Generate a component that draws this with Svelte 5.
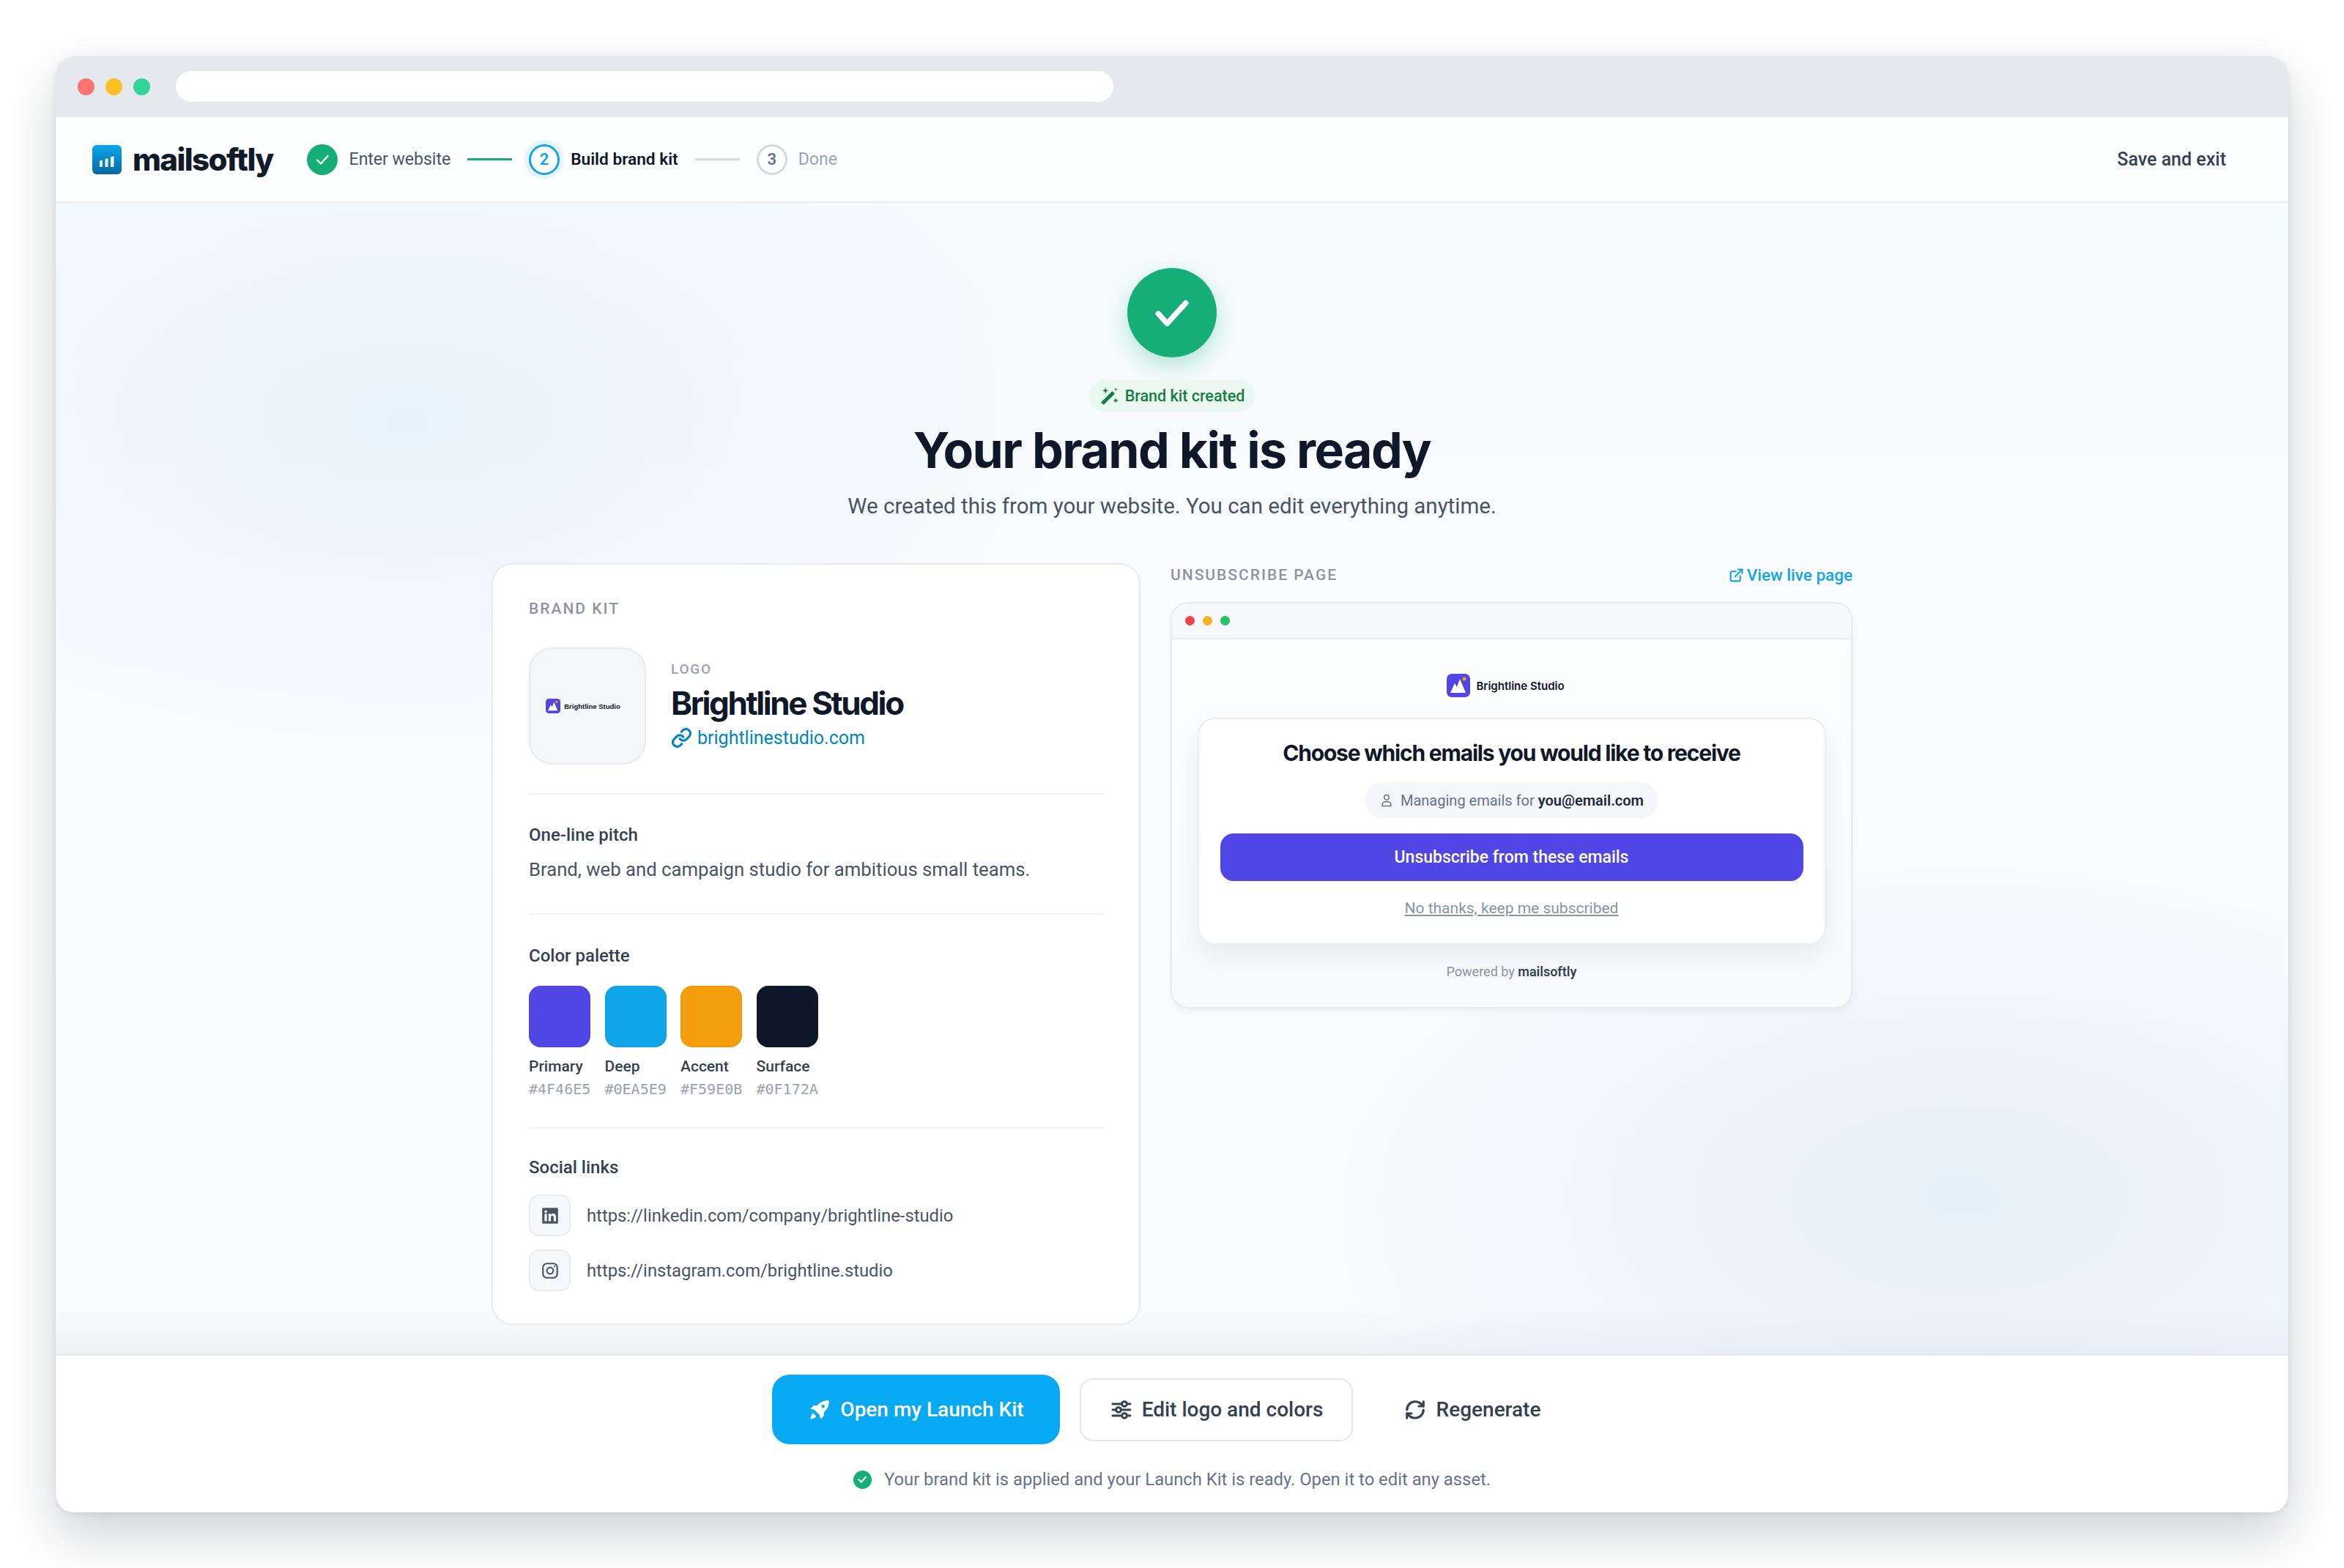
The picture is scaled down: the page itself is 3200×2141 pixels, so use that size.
<script>
  const swatches = [
    { name: 'Primary', hex: '#4F46E5' },
    { name: 'Deep', hex: '#0EA5E9' },
    { name: 'Accent', hex: '#F59E0B' },
    { name: 'Surface', hex: '#0F172A' }
  ];
</script>

<div class="page">
  <div class="window">
    <div class="chrome">
      <span class="dot red"></span>
      <span class="dot yellow"></span>
      <span class="dot green"></span>
      <div class="address"></div>
    </div>

    <header class="topbar">
      <div class="brand">
        <div class="brand-icon">
          <svg viewBox="0 0 40 40" width="40" height="40"><path d="M10 21.500l4-1V30h-4zM17.500 19.500l4-1.500V30h-4zM25 16.500l4.500-1.500V30H25z" fill="#fff" opacity=".92"/></svg>
        </div>
        <span class="brand-name">mailsoftly</span>
      </div>
      <div class="steps">
        <span class="circle done">
          <svg viewBox="0 0 24 24" width="24" height="24" fill="none" stroke="#fff" stroke-width="2.400" stroke-linecap="round" stroke-linejoin="round"><path d="M5 12.500l5 5L19.500 7"/></svg>
        </span>
        <span class="step-label">Enter website</span>
        <span class="line active"></span>
        <span class="circle current">2</span>
        <span class="step-label strong">Build brand kit</span>
        <span class="line"></span>
        <span class="circle todo">3</span>
        <span class="step-label muted">Done</span>
      </div>
      <a class="save">Save and exit</a>
    </header>

    <main class="main">
      <div class="big-check">
        <svg viewBox="0 0 24 24" width="64" height="64" fill="none" stroke="#fff" stroke-width="2.800" stroke-linecap="round" stroke-linejoin="round"><path d="M5 12.500l4.500 5 9.500-10.500"/></svg>
      </div>
      <div class="created">
        <svg viewBox="0 0 24 24" width="28" height="28" fill="#15803d"><path d="M2.500 18.500L15 6l3 3L5.500 21.500a1 1 0 0 1-1.400 0l-1.600-1.600a1 1 0 0 1 0-1.400z"/><path d="M7 2l1 2.500L10.500 5.500 8 6.500 7 9 6 6.500 3.500 5.500 6 4.500zM19 14l.9 2.100 2.100.9-2.100.9L19 20l-.9-2.100L16 17l2.100-.9zM19 2l.6 1.400L21 4l-1.400.6L19 6l-.6-1.400L17 4l1.400-.6z"/></svg>
        Brand kit created
      </div>
      <h1>Your brand kit is ready</h1>
      <p class="sub">We created this from your website. You can edit everything anytime.</p>

      <div class="columns">
        <section class="kit">
          <div class="eyebrow">BRAND KIT</div>
          <div class="logo-row">
            <div class="logo-box">
              <svg viewBox="0 0 32 32" width="20" height="20"><rect width="32" height="32" rx="7" fill="#4f46e5"/><path d="M5 26l6-13 3 5 4-11 8 19z" fill="#fff"/><circle cx="24" cy="7" r="2.500" fill="#f59e0b"/></svg>
              <span>Brightline Studio</span>
            </div>
            <div class="logo-info">
              <div class="small-label">LOGO</div>
              <div class="studio">Brightline Studio</div>
              <a class="site">
                <svg viewBox="0 0 24 24" width="29" height="29" fill="none" stroke="#0284c7" stroke-width="2.600" stroke-linecap="round" stroke-linejoin="round"><path d="M10 13a5 5 0 0 0 7.540.540l3-3a5 5 0 0 0-7.070-7.070l-1.720 1.710"/><path d="M14 11a5 5 0 0 0-7.540-.540l-3 3a5 5 0 0 0 7.070 7.070l1.710-1.710"/></svg>
                brightlinestudio.com
              </a>
            </div>
          </div>

          <hr />
          <div class="field-title first">One-line pitch</div>
          <p class="pitch">Brand, web and campaign studio for ambitious small teams.</p>

          <hr />
          <div class="field-title palette-title">Color palette</div>
          <div class="palette">
            {#each swatches as s}
              <div class="swatch">
                <div class="chip" style="background: {s.hex}"></div>
                <div class="chip-name">{s.name}</div>
                <div class="chip-hex">{s.hex}</div>
              </div>
            {/each}
          </div>

          <hr />
          <div class="field-title social-title">Social links</div>
          <div class="social">
            <span class="social-icon">
              <svg viewBox="0 0 24 24" width="26" height="26" fill="#475569"><path fill-rule="evenodd" d="M3.500 2h17A1.500 1.500 0 0 1 22 3.500v17a1.500 1.500 0 0 1-1.500 1.500h-17A1.500 1.500 0 0 1 2 20.500v-17A1.500 1.500 0 0 1 3.500 2zM5 9.500V19h3V9.500zM6.500 5a1.700 1.700 0 1 0 0 3.400 1.700 1.700 0 0 0 0-3.400zM10 9.500V19h3v-5c0-1.400.7-2.100 1.800-2.100s1.700.7 1.700 2.100v5h3v-5.600c0-2.800-1.500-4.100-3.500-4.100-1.400 0-2.400.6-3 1.500V9.500z"/></svg>
            </span>
            https://linkedin.com/company/brightline-studio
          </div>
          <div class="social">
            <span class="social-icon">
              <svg viewBox="0 0 24 24" width="26" height="26" fill="none" stroke="#475569" stroke-width="2" stroke-linecap="round"><rect x="3" y="3" width="18" height="18" rx="5"/><circle cx="12" cy="12" r="4"/><path d="M17.500 6.500h.010"/></svg>
            </span>
            https://instagram.com/brightline.studio
          </div>
        </section>

        <section class="preview">
          <div class="preview-head">
            <span class="eyebrow">UNSUBSCRIBE PAGE</span>
            <a class="live">
              <svg viewBox="0 0 24 24" width="21" height="21" fill="none" stroke="#0ea5e9" stroke-width="2.400" stroke-linecap="round" stroke-linejoin="round"><path d="M15 3h6v6"/><path d="M10 14 21 3"/><path d="M18 13v6a2 2 0 0 1-2 2H5a2 2 0 0 1-2-2V8a2 2 0 0 1 2-2h6"/></svg>
              View live page
            </a>
          </div>
          <div class="frame">
            <div class="frame-bar">
              <span class="mini red2"></span>
              <span class="mini yellow2"></span>
              <span class="mini green2"></span>
            </div>
            <div class="frame-body">
              <div class="frame-logo">
                <svg viewBox="0 0 32 32" width="32" height="32"><rect width="32" height="32" rx="7" fill="#4f46e5"/><path d="M5 26l6-13 3 5 4-11 8 19z" fill="#fff"/><circle cx="24" cy="7" r="2.500" fill="#f59e0b"/></svg>
                <span>Brightline Studio</span>
              </div>
              <div class="sheet">
                <h2>Choose which emails you would like to receive</h2>
                <div class="managing">
                  <svg viewBox="0 0 24 24" width="20" height="20" fill="none" stroke="#64748b" stroke-width="1.800" stroke-linecap="round"><circle cx="12" cy="7" r="4"/><path d="M5 21v-2a5 5 0 0 1 5-5h4a5 5 0 0 1 5 5v2z"/></svg>
                  <span>Managing emails for <b>you@email.com</b></span>
                </div>
                <button class="unsub">Unsubscribe from these emails</button>
                <a class="keep">No thanks, keep me subscribed</a>
              </div>
              <div class="powered">Powered by <b>mailsoftly</b></div>
            </div>
          </div>
        </section>
      </div>
    </main>

    <footer class="actions">
      <div class="buttons">
        <button class="btn primary">
          <svg viewBox="0 0 24 24" width="32" height="32" fill="#fff"><path fill-rule="evenodd" d="M21.500 2.500c-4.800-.3-9 1.400-12 5.200H5.800L2.500 11l4.300 1.200 5 5L13 21.500l3.300-3.300v-3.700c3.800-3 5.500-7.200 5.200-12zM15.500 6.800a1.700 1.700 0 1 1 0 3.400 1.700 1.700 0 0 1 0-3.400z"/><path d="M5.500 15.500c-1.500.8-2.500 2.500-3 6 3.500-.5 5.200-1.500 6-3z"/></svg>
          Open my Launch Kit
        </button>
        <button class="btn outline">
          <svg viewBox="0 0 24 24" width="32" height="32" fill="none" stroke="#334155" stroke-width="2.200" stroke-linecap="round"><path d="M3 6h9M18 6h3M3 12h3M12 12h9M3 18h9M18 18h3"/><circle cx="15" cy="6" r="2.500"/><circle cx="9" cy="12" r="2.500"/><circle cx="15" cy="18" r="2.500"/></svg>
          Edit logo and colors
        </button>
        <button class="btn ghost">
          <svg viewBox="0 0 24 24" width="30" height="30" fill="none" stroke="#334155" stroke-width="2.500" stroke-linecap="round" stroke-linejoin="round"><path d="M3 12a9 9 0 0 1 9-9 9.750 9.750 0 0 1 6.740 2.740L21 8"/><path d="M21 3v5h-5"/><path d="M21 12a9 9 0 0 1-9 9 9.750 9.750 0 0 1-6.740-2.740L3 16"/><path d="M8 16H3v5"/></svg>
          Regenerate
        </button>
      </div>
      <div class="status">
        <span class="status-check">
          <svg viewBox="0 0 24 24" width="16" height="16" fill="none" stroke="#fff" stroke-width="3.200" stroke-linecap="round" stroke-linejoin="round"><path d="M5 12.500l5 5L19.500 7"/></svg>
        </span>
        Your brand kit is applied and your Launch Kit is ready. Open it to edit any asset.
      </div>
    </footer>
  </div>
</div>

<style>
  :global(body) {
    margin: 0;
    background: #fff;
    font-family: Roboto, "Liberation Sans", sans-serif;
    color: #0f172a;
  }

  .page {
    height: 2141px;
    box-sizing: border-box;
    padding: 77px 76px 76px;
    overflow: hidden;
  }

  .window {
    height: 1988px;
    border-radius: 26px;
    overflow: hidden;
    background: #fff;
    display: flex;
    flex-direction: column;
    box-shadow: 0 30px 70px rgba(15, 23, 42, 0.2), 0 2px 10px rgba(15, 23, 42, 0.08);
  }

  .chrome {
    height: 83px;
    flex: none;
    background: #e5e9ee;
    display: flex;
    align-items: center;
    padding-left: 30px;
    box-sizing: border-box;
  }

  .dot { width: 23px; height: 23px; border-radius: 50%; margin-right: 15px; }
  .red { background: #ff7272; }
  .yellow { background: #fcc024; }
  .green { background: #34d399; }

  .address {
    width: 1280px;
    height: 42px;
    margin: 0 0 1px 20px;
    border-radius: 21px;
    background: #fff;
  }

  .topbar {
    height: 117px;
    flex: none;
    box-sizing: border-box;
    display: flex;
    align-items: center;
    padding: 0 85px 0 50px;
    background: #fdfeff;
    border-bottom: 2px solid #e8edf2;
  }

  .brand { display: flex; align-items: center; gap: 15px; }

  .brand-icon {
    width: 40px;
    height: 40px;
    border-radius: 6px;
    background: linear-gradient(180deg, #0ea5e9, #0369a1);
  }

  .brand-name {
    font-family: Inter, sans-serif;
    font-size: 42px;
    font-weight: 800;
    letter-spacing: -1.600px;
    line-height: 50px;
    color: #0f1a2b;
  }

  .steps { display: flex; align-items: center; margin-left: 46px; flex: 1; }

  .circle {
    width: 42px;
    height: 42px;
    box-sizing: border-box;
    border-radius: 50%;
    display: flex;
    align-items: center;
    justify-content: center;
    font-size: 22px;
    font-weight: 600;
    flex: none;
  }

  .done { background: #15ad78; }
  .current { border: 3px solid #0ea5e9; color: #0ea5e9; background: #fff; box-shadow: 0 0 0 6px #e6f6fd; }
  .todo { border: 3px solid #d5d9df; color: #64748b; background: #fff; }

  .step-label { font-size: 23px; color: #475569; margin-left: 16px; line-height: 30px; white-space: nowrap; }
  .strong { color: #0f172a; font-weight: 600; font-size: 22.700px; margin-left: 15px; }
  .muted { color: #94a3b8; margin-left: 15px; }

  .line { width: 61px; height: 3px; margin: 0 23px; background: #d9dde2; flex: none; }
  .line.active { background: #15ad78; }

  .save { font-size: 25px; font-weight: 500; color: #334155; white-space: nowrap; }

  .main {
    flex: 1;
    min-height: 0;
    display: flex;
    flex-direction: column;
    align-items: center;
    padding-top: 89px;
    box-sizing: border-box;
    background:
      radial-gradient(900px 500px at 480px 300px, rgba(205, 230, 250, 0.4), transparent 100%),
      radial-gradient(900px 500px at 2600px 1360px, rgba(205, 228, 245, 0.5), transparent 100%),
      linear-gradient(180deg, #f6fbfe 0%, #fbfcfe 45%, #fafbfd 96%, #eef1f6 100%);
  }

  .big-check {
    width: 122px;
    height: 122px;
    border-radius: 50%;
    background: #15ad78;
    display: flex;
    align-items: center;
    justify-content: center;
    box-shadow: 0 12px 32px rgba(21, 173, 120, 0.3);
  }

  .created {
    height: 45px;
    margin-top: 30px;
    padding: 0 15px;
    border-radius: 23px;
    background: #ecf9f3;
    color: #15803d;
    font-size: 21.500px;
    font-weight: 500;
    display: flex;
    align-items: center;
    gap: 7px;
  }

  h1 {
    font-family: Inter, sans-serif;
    margin: 13px 0 0;
    font-size: 68px;
    line-height: 76px;
    font-weight: 700;
    letter-spacing: -1.600px;
    color: #0f172a;
  }

  .sub {
    margin: 19px 0 0;
    font-size: 29.500px;
    line-height: 40px;
    color: #475569;
  }

  .columns {
    margin-top: 58px;
    display: grid;
    grid-template-columns: 886px 931px;
    gap: 41px;
    align-items: start;
  }

  .kit {
    height: 1040px;
    box-sizing: border-box;
    padding: 48px 49px 0;
    background: #fff;
    border: 2px solid #e7ebf0;
    border-radius: 28px;
  }

  .eyebrow {
    font-size: 21px;
    line-height: 24px;
    font-weight: 500;
    letter-spacing: 2px;
    color: #8a94a6;
  }

  .logo-row { display: flex; gap: 34px; margin-top: 41px; align-items: center; }

  .logo-box {
    width: 160px;
    height: 160px;
    box-sizing: border-box;
    border: 2px solid #e7ebf0;
    border-radius: 32px;
    background: #f4f6fa;
    display: flex;
    align-items: center;
    justify-content: center;
    gap: 5px;
    padding-right: 12px;
    flex: none;
  }

  .logo-box span { font-family: "Liberation Sans", sans-serif; font-size: 9.500px; font-weight: 700; white-space: nowrap; }

  .small-label { font-size: 19px; line-height: 22px; font-weight: 500; letter-spacing: 1.800px; color: #94a3b8; }

  .studio {
    font-family: Inter, sans-serif;
    font-size: 44px;
    line-height: 56px;
    font-weight: 700;
    letter-spacing: -2.400px;
    margin-top: 7px;
  }

  .site {
    display: flex;
    align-items: center;
    gap: 7px;
    margin-top: 2px;
    font-size: 25px;
    line-height: 36px;
    color: #0284c7;
  }

  hr { border: 0; border-top: 2px solid #eff2f5; margin: 39px 0 0; }

  .field-title { font-size: 24px; line-height: 28px; font-weight: 500; color: #334155; margin-top: 41px; }
  .palette-title { margin-top: 42px; }
  .social-title { margin-top: 39px; }

  .pitch { margin: 15px 0 0; font-size: 25.700px; line-height: 36px; color: #475569; padding-bottom: 3px; }

  .palette { display: flex; gap: 19.500px; margin-top: 27px; }

  .swatch { width: 84px; }

  .chip { height: 84px; border-radius: 16px; box-shadow: inset 0 0 0 1px rgba(0, 0, 0, 0.05); }

  .chip-name { margin-top: 13px; font-size: 21px; line-height: 26px; font-weight: 500; color: #334155; white-space: nowrap; }

  .chip-hex {
    margin-top: 5px;
    font-family: "DejaVu Sans Mono", "Liberation Mono", monospace;
    font-size: 20px;
    line-height: 26px;
    color: #94a3b8;
    white-space: nowrap;
  }

  .social {
    display: flex;
    align-items: center;
    gap: 22px;
    margin-top: 18px;
    font-size: 23.800px;
    color: #475569;
    white-space: nowrap;
  }

  .social-title + .social { margin-top: 23px; }

  .social-icon {
    width: 57px;
    height: 57px;
    box-sizing: border-box;
    border: 2px solid #e8ecf1;
    border-radius: 14px;
    background: #f6f8fb;
    display: flex;
    align-items: center;
    justify-content: center;
    flex: none;
  }

  .preview-head { display: flex; justify-content: space-between; align-items: center; height: 32px; }

  .live { display: flex; align-items: center; gap: 4px; font-size: 22.500px; font-weight: 500; color: #0ea5e9; white-space: nowrap; }

  .frame {
    margin-top: 21px;
    height: 555px;
    box-sizing: border-box;
    border: 2px solid #e7ebf0;
    border-radius: 24px;
    overflow: hidden;
    background: linear-gradient(180deg, #fdfeff, #f8fafc);
    box-shadow: 0 4px 10px rgba(15, 23, 42, 0.05);
  }

  .frame-bar {
    height: 49px;
    box-sizing: border-box;
    background: #f6f8fb;
    border-bottom: 2px solid #e9ecf1;
    display: flex;
    align-items: center;
    gap: 11px;
    padding-left: 18px;
  }

  .mini { width: 13px; height: 13px; border-radius: 50%; }
  .red2 { background: #ef4444; }
  .yellow2 { background: #fbb024; }
  .green2 { background: #22c55e; }

  .frame-body { padding: 47px 35px 0; display: flex; flex-direction: column; align-items: center; }

  .frame-logo { display: flex; align-items: center; gap: 8px; height: 32px; margin-right: 16px; }

  .frame-logo span { font-family: Inter, sans-serif; font-size: 15px; font-weight: 600; color: #0f172a; white-space: nowrap; }

  .sheet {
    margin-top: 28px;
    width: 858px;
    height: 310px;
    box-sizing: border-box;
    padding: 26px 29px 0;
    background: #fff;
    border: 2px solid #e9ecf1;
    border-radius: 24px;
    box-shadow: 0 16px 36px rgba(15, 23, 42, 0.07);
    display: flex;
    flex-direction: column;
    align-items: center;
  }

  h2 {
    font-family: Inter, sans-serif;
    margin: 0;
    font-size: 30px;
    line-height: 40px;
    font-weight: 700;
    letter-spacing: -1.200px;
    white-space: nowrap;
  }

  .managing {
    height: 49px;
    margin-top: 20px;
    padding: 0 20px;
    box-sizing: border-box;
    background: #f4f6f9;
    border-radius: 25px;
    font-size: 20px;
    color: #64748b;
    display: flex;
    align-items: center;
    gap: 9px;
  }

  .managing b { font-weight: 600; color: #1e293b; }

  .unsub {
    margin-top: 21px;
    width: 100%;
    height: 65px;
    border: 0;
    border-radius: 18px;
    background: #4f46e5;
    color: #fff;
    font-family: inherit;
    font-size: 23px;
    font-weight: 500;
  }

  .keep {
    margin-top: 22px;
    font-size: 21px;
    line-height: 30px;
    color: #8a94a6;
    text-decoration: underline;
  }

  .powered { margin-top: 25px; font-size: 18px; line-height: 24px; color: #8a94a6; }

  .powered b { font-weight: 600; color: #334155; }

  .actions {
    height: 216px;
    flex: none;
    box-sizing: border-box;
    padding-top: 26px;
    background: #fff;
    border-top: 2px solid #e5e9ee;
    display: flex;
    flex-direction: column;
    align-items: center;
  }

  .buttons { display: flex; align-items: center; gap: 27px; }

  .btn {
    font-family: inherit;
    font-size: 28px;
    font-weight: 500;
    display: flex;
    align-items: center;
    justify-content: center;
    box-sizing: border-box;
    white-space: nowrap;
    cursor: pointer;
  }

  .primary {
    width: 393px;
    height: 95px;
    gap: 12px;
    border: 0;
    border-radius: 24px;
    background: #06a9f4;
    color: #fff;
  }

  .outline {
    width: 373px;
    height: 86px;
    gap: 12px;
    background: #fff;
    border: 2px solid #e5e8ed;
    border-radius: 18px;
    color: #334155;
  }

  .ghost {
    width: 272px;
    height: 86px;
    gap: 14px;
    background: none;
    border: 0;
    color: #334155;
  }

  .status {
    margin-top: 32px;
    height: 32px;
    display: flex;
    align-items: center;
    gap: 17px;
    font-size: 23.800px;
    color: #64748b;
  }

  .status-check {
    width: 25px;
    height: 25px;
    border-radius: 50%;
    background: #15ad78;
    display: flex;
    align-items: center;
    justify-content: center;
  }
</style>
